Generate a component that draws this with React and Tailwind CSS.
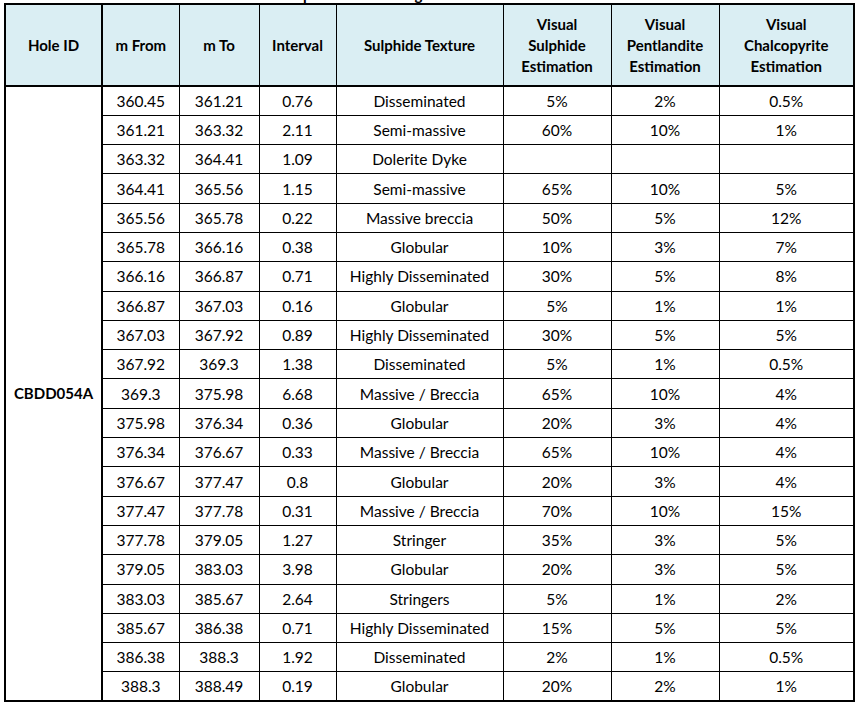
import React from "react";

const rows = [
  ["360.45", "361.21", "0.76", "Disseminated", "5%", "2%", "0.5%"],
  ["361.21", "363.32", "2.11", "Semi-massive", "60%", "10%", "1%"],
  ["363.32", "364.41", "1.09", "Dolerite Dyke", "", "", ""],
  ["364.41", "365.56", "1.15", "Semi-massive", "65%", "10%", "5%"],
  ["365.56", "365.78", "0.22", "Massive breccia", "50%", "5%", "12%"],
  ["365.78", "366.16", "0.38", "Globular", "10%", "3%", "7%"],
  ["366.16", "366.87", "0.71", "Highly Disseminated", "30%", "5%", "8%"],
  ["366.87", "367.03", "0.16", "Globular", "5%", "1%", "1%"],
  ["367.03", "367.92", "0.89", "Highly Disseminated", "30%", "5%", "5%"],
  ["367.92", "369.3", "1.38", "Disseminated", "5%", "1%", "0.5%"],
  ["369.3", "375.98", "6.68", "Massive / Breccia", "65%", "10%", "4%"],
  ["375.98", "376.34", "0.36", "Globular", "20%", "3%", "4%"],
  ["376.34", "376.67", "0.33", "Massive / Breccia", "65%", "10%", "4%"],
  ["376.67", "377.47", "0.8", "Globular", "20%", "3%", "4%"],
  ["377.47", "377.78", "0.31", "Massive / Breccia", "70%", "10%", "15%"],
  ["377.78", "379.05", "1.27", "Stringer", "35%", "3%", "5%"],
  ["379.05", "383.03", "3.98", "Globular", "20%", "3%", "5%"],
  ["383.03", "385.67", "2.64", "Stringers", "5%", "1%", "2%"],
  ["385.67", "386.38", "0.71", "Highly Disseminated", "15%", "5%", "5%"],
  ["386.38", "388.3", "1.92", "Disseminated", "2%", "1%", "0.5%"],
  ["388.3", "388.49", "0.19", "Globular", "20%", "2%", "1%"],
];

const headers = [
  ["Hole ID"],
  ["m From"],
  ["m To"],
  ["Interval"],
  ["Sulphide Texture"],
  ["Visual", "Sulphide", "Estimation"],
  ["Visual", "Pentlandite", "Estimation"],
  ["Visual", "Chalcopyrite", "Estimation"],
];

export default function App() {
  return (
    <div className="bg-white w-[861px] h-[709px] overflow-hidden text-black font-['Lato',sans-serif]">
      {/* clipped caption above the table, only descenders show */}
      <div className="h-[3px] overflow-hidden">
        <div className="flex -mt-[14px] text-[15px] leading-[16px] font-bold">
          <span className="ml-[303px]">p</span>
          <span className="ml-[103px]">g</span>
        </div>
      </div>
      <table className="ml-[4px] table-fixed border-collapse border-2 border-black text-[15.5px] text-center">
        <colgroup>
          <col className="w-[97px]" />
          <col className="w-[77px]" />
          <col className="w-[80px]" />
          <col className="w-[77px]" />
          <col className="w-[167px]" />
          <col className="w-[108px]" />
          <col className="w-[108px]" />
          <col className="w-[135px]" />
        </colgroup>
        <thead>
          <tr className="h-[82px] bg-[#daeef3]">
            {headers.map((h, i) => (
              <th
                key={i}
                className={
                  "border border-black border-b-2 text-[15px] font-bold leading-[21px] align-middle " +
                  (i === 0 ? "border-r-2" : "")
                }
              >
                {h.map((line) => (
                  <div key={line}>{line}</div>
                ))}
              </th>
            ))}
          </tr>
        </thead>
        <tbody>
          {rows.map((r, ri) => (
            <tr key={ri} className="h-[29.3px]">
              {ri === 0 && (
                <td rowSpan={rows.length} className="border border-black border-r-2 text-[15px] font-bold align-middle">
                  CBDD054A
                </td>
              )}
              {r.map((c, ci) => (
                <td key={ci} className="border border-black leading-[18px] p-0">
                  {c}
                </td>
              ))}
            </tr>
          ))}
        </tbody>
      </table>
    </div>
  );
}
